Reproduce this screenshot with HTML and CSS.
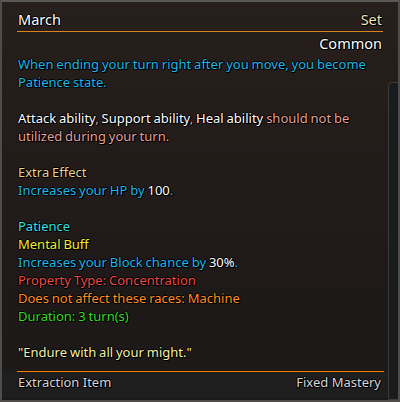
FILE: index.html
```html
<!DOCTYPE html>
<html lang="en">
<head>
  <meta charset="utf-8">
  <title>March - Tooltip</title>
  <link rel="stylesheet" href="styles.css">
</head>
<body>
  <div class="tooltip">
    <div class="head">
      <span class="name">March</span>
      <span class="kind">Set</span>
    </div>
    <div class="grade">Common</div>
    <div class="desc">
      <p class="cyan">When ending your turn right after you move, you become Patience state.</p>
      <p class="pink"><span class="white">Attack ability</span>, <span class="white">Support ability</span>, <span class="white">Heal ability</span> should not be utilized during your turn.</p>
      <p><span class="tan">Extra Effect</span><br><span class="cyan">Increases your HP by <span class="white">100</span>.</span></p>
      <p><span class="teal">Patience</span><br>
        <span class="yellow">Mental Buff</span><br>
        <span class="cyan">Increases your Block chance by <span class="white">30%</span>.</span><br>
        <span class="red">Property Type: Concentration</span><br>
        <span class="orange">Does not affect these races: Machine</span><br>
        <span class="green">Duration: 3 turn(s)</span></p>
      <p class="quote">"Endure with all your might."</p>
    </div>
    <div class="foot">
      <div class="foot-bar">
        <span>Extraction Item</span>
        <span>Fixed Mastery</span>
      </div>
    </div>
    <div class="scroll"></div>
  </div>
</body>
</html>
```
FILE: styles.css
```css
html, body { margin: 0; width: 400px; height: 402px; background: #1b1a1a; }
body { font-family: "Noto Sans", sans-serif; font-size: 13px; line-height: 18px; }
.tooltip { box-sizing: border-box; width: 400px; height: 402px; border: 2px solid #4e4d4c; border-top-color: #5a5856; display: flex; flex-direction: column; position: relative; background: linear-gradient(#271f1b 0%, #221b19 45%, #1c1918 85%); }
.head, .grade, .desc, .foot { text-shadow: 1px 0 0 #000, -1px 0 0 #000, 0 1px 0 #000, 0 -1px 0 #000, 1px 1px 0 #000; }
.head { display: flex; flex-shrink: 0; justify-content: space-between; align-items: flex-end; margin: 0 15px; height: 30px; padding-bottom: 3px; border-bottom: 1px solid #d9841f; box-sizing: border-box; }
.name { color: #fff; font-size: 14.5px; padding-left: 1px; }
.kind { color: #efe6b4; font-size: 14.5px; padding-right: 1px; }
.grade { flex-shrink: 0; color: #fff; font-size: 14.5px; text-align: right; margin: 2px 16px 0; height: 18px; }
.desc { flex: 1; padding: 3px 12px 0 16px; word-spacing: -0.5px; }
.desc p { margin: 0 0 18px; }
.desc .quote { margin: 0; }
.cyan { color: #1cb8ec; }
.teal { color: #2ee0e4; }
.white { color: #fff; }
.pink { color: #e6a29c; }
.tan { color: #e2d394; }
.yellow { color: #f3ef2a; }
.red { color: #ec4a45; }
.orange { color: #ff8f1f; }
.green { color: #32de22; }
.quote { color: #f6f0a6; }
.foot { flex-shrink: 0; height: 27px; margin-bottom: 2px; background: #1f1e1e; color: #d6d6d6; }
.foot-bar { display: flex; justify-content: space-between; margin: 0 14px 0 15px; padding: 0 3px 0 1px; border-top: 1px solid #ff7a00; line-height: 20px; }
.scroll { position: absolute; right: 0; top: 80px; bottom: 0; width: 9px; background: #1a1b1c; border: 1px solid #3a3a3a; border-right: 0; border-radius: 5px 0 0 0; }
```
